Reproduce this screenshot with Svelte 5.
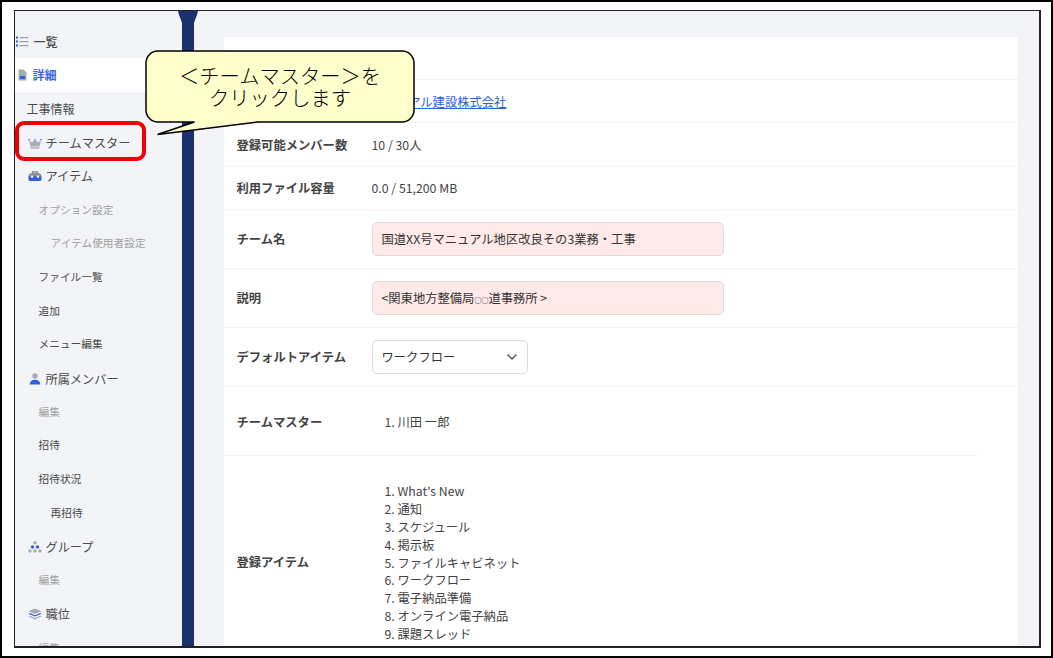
<script>
  const menu = [
    { label: "一覧", level: "top", icon: "list" },
    { label: "詳細", level: "top", icon: "doc", active: true },
    { label: "工事情報", level: "plain" },
    { label: "チームマスター", level: "sec", icon: "crown" },
    { label: "アイテム", level: "sec", icon: "box" },
    { label: "オプション設定", level: "sub", muted: true },
    { label: "アイテム使用者設定", level: "subsub", muted: true },
    { label: "ファイル一覧", level: "sub" },
    { label: "追加", level: "sub" },
    { label: "メニュー編集", level: "sub" },
    { label: "所属メンバー", level: "sec", icon: "user" },
    { label: "編集", level: "sub", muted: true },
    { label: "招待", level: "sub" },
    { label: "招待状況", level: "sub" },
    { label: "再招待", level: "subsub" },
    { label: "グループ", level: "sec", icon: "group" },
    { label: "編集", level: "sub", muted: true },
    { label: "職位", level: "sec", icon: "layers" },
    { label: "編集", level: "sub", muted: true }
  ];

  const items = [
    "What's New",
    "通知",
    "スケジュール",
    "掲示板",
    "ファイルキャビネット",
    "ワークフロー",
    "電子納品準備",
    "オンライン電子納品",
    "課題スレッド"
  ];
</script>

<div class="page">
  <div class="frame">
    <nav class="side">
      {#each menu as m}
        <div class="row {m.level}" class:active={m.active} class:muted={m.muted}>
          {#if m.icon === "list"}
            <svg class="ic list" viewBox="0 0 13 11">
              <g fill="#2f5fe0"><rect x="0" y="0.5" width="2" height="2" /><rect x="0" y="4.5" width="2" height="2" /><rect x="0" y="8.5" width="2" height="2" /></g>
              <g fill="#9a9ea6"><rect x="3.5" y="1" width="9" height="1.2" /><rect x="3.5" y="5" width="9" height="1.2" /><rect x="3.5" y="9" width="9" height="1.2" /></g>
            </svg>
          {:else if m.icon === "doc"}
            <svg class="ic doc" viewBox="0 0 9 12">
              <path d="M0.5 0.5h5l3 3v8h-8z" fill="#a6aab4" />
              <rect x="2" y="7" width="5" height="3" fill="#2f5fe0" />
            </svg>
          {:else if m.icon === "crown"}
            <svg class="ic" viewBox="0 0 14 12">
              <path d="M2.5 9.5L1 3.5l3.2 2L7 1.5l2.8 4 3.2-2-1.5 6z" fill="#a9adb5" />
              <rect x="2.6" y="10.2" width="8.8" height="1.5" fill="#a9adb5" />
              <g fill="#3d6be4"><circle cx="1" cy="2.6" r="0.8" /><circle cx="13" cy="2.6" r="0.8" /></g>
            </svg>
          {:else if m.icon === "box"}
            <svg class="ic" viewBox="0 0 14 11">
              <path d="M4.5 3V1.300h5V3" fill="none" stroke="#7d828c" stroke-width="1.300" />
              <path d="M0.500 6.500V5.500C0.500 3.500 2 2.500 4 2.500h6c2 0 3.500 1 3.500 3v1z" fill="#8c909a" />
              <path d="M0.500 6h13v3a1.400 1.400 0 0 1-1.400 1.400H1.900A1.400 1.400 0 0 1 0.500 9z" fill="#2f5fe0" />
              <rect x="3" y="5.200" width="2" height="2" fill="#fff" /><rect x="9" y="5.200" width="2" height="2" fill="#fff" />
            </svg>
          {:else if m.icon === "user"}
            <svg class="ic" viewBox="0 0 12 12">
              <circle cx="6" cy="3" r="2.700" fill="#a6aab4" />
              <path d="M0.800 11.500c0-3.200 2-4.700 5.200-4.700s5.200 1.500 5.200 4.700z" fill="#2f5fe0" />
            </svg>
          {:else if m.icon === "group"}
            <svg class="ic" viewBox="0 0 14 12">
              <g fill="#a6aab4"><circle cx="7" cy="1.800" r="1.700" /><circle cx="2" cy="10" r="1.700" /><circle cx="7" cy="10" r="1.700" /><circle cx="12" cy="10" r="1.700" /></g>
              <g fill="#2f5fe0"><circle cx="4.500" cy="6" r="1.700" /><circle cx="9.500" cy="6" r="1.700" /></g>
            </svg>
          {:else if m.icon === "layers"}
            <svg class="ic" viewBox="0 0 14 12">
              <path d="M7 0.500l6.500 2.800L7 6.100 0.500 3.300z" fill="#a6aab4" />
              <path d="M1.800 5L7 7.300 12.200 5l1.300.700L7 8.600 0.500 5.700z" fill="#2f5fe0" />
              <path d="M1.800 7.800L7 10l5.200-2.200 1.300.700L7 11.500 0.500 8.500z" fill="#a6aab4" />
            </svg>
          {/if}
          <span>{m.label}</span>
        </div>
      {/each}
    </nav>

    <div class="bar">
      <svg class="flare" viewBox="0 0 20 12"><path d="M0 0h20c-1 5-3 8-4 12H4C3 8 1 5 0 0z" fill="#1c3270" /></svg>
    </div>

    <main class="main">
      <section class="card">
        <div class="line h43"></div>
        <div class="line h43 nudge"><b></b><a href="#top">マニュアル建設株式会社</a></div>
        <div class="line h44 nudge"><b>登録可能メンバー数</b><span>10 / 30人</span></div>
        <div class="line h43"><b>利用ファイル容量</b><span>0.0 / 51,200 MB</span></div>
        <div class="line h59"><b>チーム名</b><div class="field pink">国道XX号マニュアル地区改良その3業務・工事</div></div>
        <div class="line h59"><b>説明</b><div class="field pink"><span>&lt;関東地方整備局<small>○○</small>道事務所 &gt;</span></div></div>
        <div class="line h59">
          <b>デフォルトアイテム</b>
          <div class="field select">
            ワークフロー
            <svg viewBox="0 0 12 8"><path d="M1.500 1.500L6 6l4.500-4.500" fill="none" stroke="#555" stroke-width="1.400" /></svg>
          </div>
        </div>
        <div class="line h69 inset"><b>チームマスター</b><ol><li>川田 一郎</li></ol></div>
        <div class="line list-row">
          <b>登録アイテム</b>
          <ol>
            {#each items as item}
              <li>{item}</li>
            {/each}
          </ol>
        </div>
      </section>
    </main>

    <div class="redbox"></div>
    <div class="callout">
      <svg viewBox="0 0 274 90" width="274" height="90">
        <path
          d="M14 1H258a12 12 0 0 1 12 12V60a12 12 0 0 1-12 12H113.500L13.500 84.500 50.500 72H14A12 12 0 0 1 2 60V13A12 12 0 0 1 14 1z"
          fill="#ffffcc"
          stroke="#000"
          stroke-width="1.500"
        />
      </svg>
      <p>＜チームマスター＞を<br />クリックします</p>
    </div>
  </div>
</div>

<style>
  :global(body) {
    margin: 0;
    font-family: "Noto Sans CJK JP", "Noto Sans", sans-serif;
    font-size: 12.300px;
    color: #444;
  }

  .page {
    box-sizing: border-box;
    width: 1053px;
    height: 658px;
    border: 2px solid #000;
    background: #fff;
    padding: 8px 10px 8px 12px;
  }

  .frame {
    position: relative;
    box-sizing: border-box;
    height: 638px;
    border: 1.500px solid #222;
    border-bottom-width: 2px;
    border-right-width: 2px;
    background: #f2f4f8;
    display: flex;
    overflow: hidden;
  }

  .side {
    width: 166.500px;
    flex: none;
    padding-top: 13.400px;
  }

  .row {
    box-sizing: border-box;
    height: 33.700px;
    display: flex;
    align-items: center;
    color: #4a4a4a;
  }

  .row.top {
    padding-left: 1px;
    gap: 4.500px;
    font-size: 12px;
    font-weight: 500;
  }

  .row.active {
    background: #fff;
    color: #3d66d9;
    font-weight: 700;
    gap: 3.500px;
  }

  .row.plain {
    padding-left: 11.500px;
    font-size: 12px;
  }

  .row.sec {
    padding: 1px 0 0 12.500px;
    gap: 4px;
    font-size: 12.200px;
  }

  .row.sub {
    padding: 0 0 1px 23.500px;
    font-size: 10.700px;
  }

  .row.subsub {
    padding: 0 0 1px 35.500px;
    font-size: 10.700px;
  }

  .row.muted {
    color: #a0a0a0;
  }

  .ic {
    width: 14px;
    height: 12px;
    flex: none;
  }

  .ic.list {
    width: 13px;
    height: 11px;
  }

  .ic.doc {
    width: 9px;
    height: 12px;
    margin: 0 2.500px 0 1.500px;
  }

  .bar {
    position: relative;
    width: 12px;
    flex: none;
    background: #1c3270;
  }

  .flare {
    position: absolute;
    top: 0;
    left: -4px;
    width: 20px;
    height: 12px;
  }

  .main {
    flex: 1;
    padding: 25.500px 21px 0 30px;
  }

  .card {
    background: #fff;
    height: 700px;
  }

  .line {
    box-sizing: border-box;
    display: flex;
    align-items: center;
    padding-left: 13px;
    border-bottom: 1px solid #f2f2f4;
  }

  .line b {
    width: 135px;
    flex: none;
    font-weight: 700;
    color: #444;
  }

  .h43 { height: 43px; }
  .h44 { height: 44px; }
  .h59 { height: 59px; }
  .h69 { height: 69px; padding-top: 2px; }

  .nudge {
    padding-top: 2px;
  }

  .inset {
    margin-right: 40px;
  }

  .inset ol {
    padding-top: 2px;
  }

  .list-row {
    height: 212px;
    border-bottom: none;
  }

  .list-row ol {
    padding-top: 4px;
  }

  .line a {
    color: #2a62d8;
    text-decoration: underline;
  }

  .field {
    box-sizing: border-box;
    height: 34px;
    border: 1px solid #dcdcdc;
    border-radius: 5px;
    padding: 0 9px;
    display: flex;
    align-items: center;
    color: #333;
  }

  .field small {
    font-size: 7px;
    font-weight: 700;
    color: #222;
  }

  .pink {
    width: 352px;
    background: #ffe9e9;
  }

  .select {
    width: 156px;
    background: #fff;
    justify-content: space-between;
  }

  .select svg {
    width: 12px;
    height: 8px;
  }

  ol {
    margin: 0;
    padding: 0 0 0 26px;
    line-height: 17.900px;
  }

  .callout {
    position: absolute;
    left: 129px;
    top: 38.500px;
    width: 274px;
    height: 90px;
  }

  .callout svg {
    display: block;
  }

  .callout p {
    position: absolute;
    left: 2px;
    top: 1px;
    width: 268px;
    height: 70px;
    margin: 0;
    display: flex;
    align-items: center;
    justify-content: center;
    text-align: center;
    font-size: 20.300px;
    font-weight: 300;
    line-height: 22px;
    color: #000;
  }

  .redbox {
    position: absolute;
    left: -0.500px;
    top: 110px;
    box-sizing: border-box;
    width: 131px;
    height: 40px;
    border: 4px solid #f00000;
    border-radius: 9px;
  }
</style>
